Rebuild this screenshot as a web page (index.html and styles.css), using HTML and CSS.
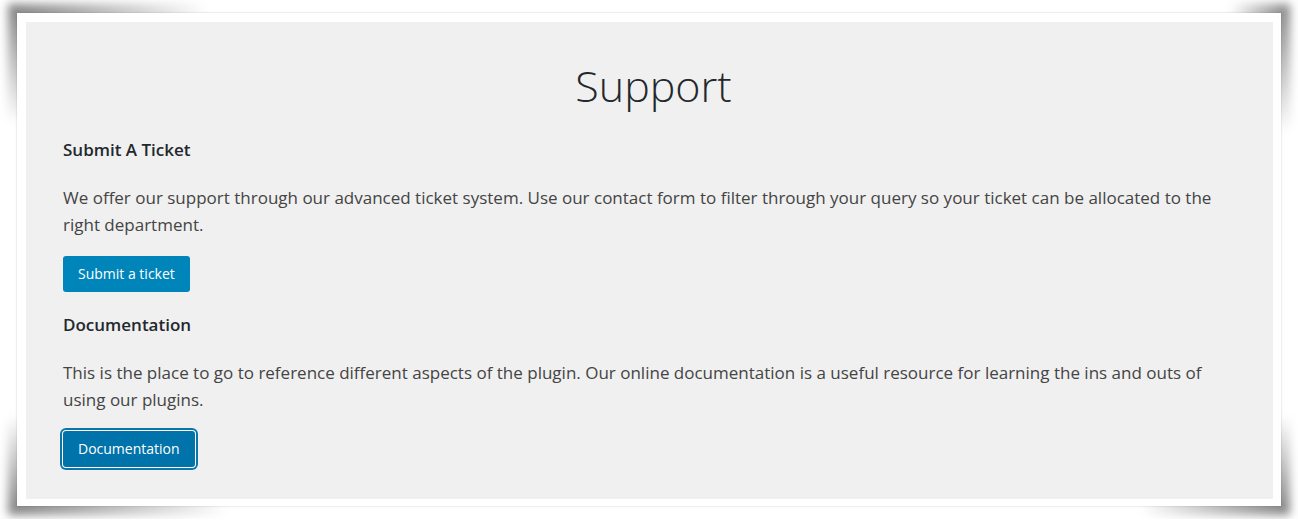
FILE: index.html
```html
<!DOCTYPE html>
<html lang="en">
<head>
  <meta charset="UTF-8" />
  <title>Support</title>
  <meta name="viewport" content="width=device-width, initial-scale=1.0" />
  <link rel="stylesheet" href="styles.css">
</head>
<body>
  <div class="shot">
    <div class="panel">
      <h1>Support</h1>

      <h2>Submit A Ticket</h2>
      <p>We offer our support through our advanced ticket system. Use our contact form to filter through your query so your ticket can be allocated to the right department.</p>
      <a class="button" href="#">Submit a ticket</a>

      <h2>Documentation</h2>
      <p>This is the place to go to reference different aspects of the plugin. Our online documentation is a useful resource for learning the ins and outs of using our plugins.</p>
      <a class="button focused" href="#">Documentation</a>
    </div>
  </div>
</body>
</html>
```

FILE: styles.css
```css
body {
  margin: 0;
  padding: 13px 17px;
  background: #fff;
  font-family: "Open Sans", "Noto Sans", sans-serif;
}

/* white frame round the captured page, shadow sits on the corners */
.shot {
  position: relative;
  background: #fff;
  padding: 9px 8px 7px 9px;
  box-shadow: 0 0 2px rgba(0, 0, 0, 0.2);
}
.shot::before {
  content: "";
  position: absolute;
  inset: -9px;
  z-index: -1;
  background:
    radial-gradient(ellipse 200px 120px at 0 0, rgba(0,0,0,0.5), transparent),
    radial-gradient(ellipse 60px 130px at 100% 0, rgba(0,0,0,0.5), transparent),
    radial-gradient(ellipse 220px 100px at 0 100%, rgba(0,0,0,0.5), transparent),
    radial-gradient(ellipse 150px 100px at 100% 100%, rgba(0,0,0,0.5), transparent);
  filter: blur(5px);
}

.panel {
  background: #f0f0f0;
  padding: 36px 37px 32px 37px;
  color: #444;
}

h1 {
  margin: 0;
  padding-left: 8px;
  font-size: 43px;
  line-height: 56px;
  font-weight: 300;
  text-align: center;
  color: #23282d;
}
h2 {
  margin: 21px 0 22px;
  font-size: 17px;
  line-height: 24px;
  font-weight: 600;
  color: #23282d;
}
h1 + h2 {
  margin-top: 24px;
}
p {
  margin: 0 0 18px;
  font-size: 17px;
  line-height: 27px;
}

.button {
  display: inline-block;
  height: 36px;
  line-height: 36px;
  padding: 0 15px;
  border-radius: 3px;
  background: #0085ba;
  color: #fff;
  font-size: 14px;
  text-decoration: none;
}
.button.focused {
  background: #0073aa;
  box-shadow: 0 0 0 1px #fff, 0 0 0 3px #0e74a8;
}
```
